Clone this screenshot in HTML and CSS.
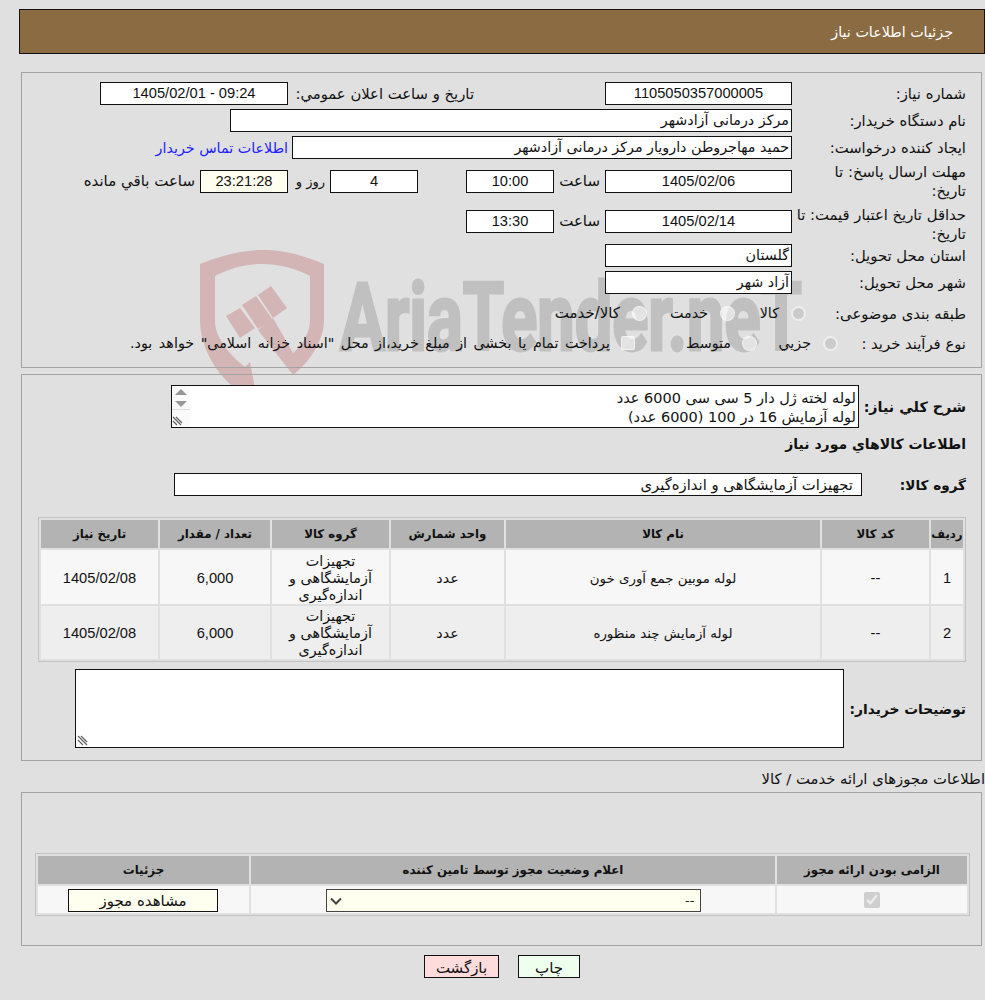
FILE: index.html
```html
<!DOCTYPE html>
<html lang="fa" dir="rtl">
<head>
<meta charset="utf-8">
<title>جزئیات اطلاعات نیاز</title>
<link rel="stylesheet" href="styles.css">
</head>
<body>
<svg class="watermark" width="985" height="400" viewBox="0 0 985 400" aria-hidden="true">
  <path class="wm-red" d="M200 24C225 14 245 10 262 10C282 10 300 14 324 24V80C324 100 310 122 293 135L258 90L273 78L293 113C303 105 310 92 310 80V36C295 28 278 24 262 24C246 24 230 28 215 36V80C215 95 224 110 245 127L250 122L257 160H232L238 150C215 135 200 105 200 80Z"/>
  <path class="wm-red" d="M226 76L240 68L255 88L240 98ZM242 65L256 56L273 80L258 89ZM258 55L271 46L287 68L273 78Z"/>
  <text class="wm-text" x="340" y="110" textLength="462" lengthAdjust="spacingAndGlyphs">AriaTender.neT</text>
</svg>

<header class="page-title"><h1>جزئیات اطلاعات نیاز</h1></header>

<section class="panel panel-main">
  <div class="row">
    <div class="label">شماره نیاز:</div>
    <div class="field w-187 center num">1105050357000005</div>
    <div class="label label-announce">تاریخ و ساعت اعلان عمومي:</div>
    <div class="field w-188 center num">09:24 - 1405/02/01</div>
  </div>
  <div class="row">
    <div class="label">نام دستگاه خریدار:</div>
    <div class="field w-562">مرکز درمانی آزادشهر</div>
  </div>
  <div class="row">
    <div class="label">ایجاد کننده درخواست:</div>
    <div class="field w-500">حمید مهاجروطن دارویار مرکز درمانی آزادشهر</div>
    <a class="contact" href="#">اطلاعات تماس خریدار</a>
  </div>
  <div class="row row-tall row-first-tall">
    <div class="label label-wrap">مهلت ارسال پاسخ: تا تاریخ:</div>
    <div class="field w-187 center num">1405/02/06</div>
    <div class="hour-label">ساعت</div>
    <div class="field w-88 center num">10:00</div>
    <div class="field w-88 center num days">4</div>
    <div class="days-label">روز و</div>
    <div class="field w-88 center num ivory">23:21:28</div>
    <div class="remain-label">ساعت باقي مانده</div>
  </div>
  <div class="row row-tall">
    <div class="label label-low">حداقل تاریخ اعتبار قیمت: تا تاریخ:</div>
    <div class="field w-187 center num">1405/02/14</div>
    <div class="hour-label">ساعت</div>
    <div class="field w-88 center num">13:30</div>
  </div>
  <div class="row row-after-tall">
    <div class="label">استان محل تحویل:</div>
    <div class="field w-187">گلستان</div>
  </div>
  <div class="row">
    <div class="label">شهر محل تحویل:</div>
    <div class="field w-187">آزاد شهر</div>
  </div>
  <div class="row row-choice">
    <div class="label label-subject">طبقه بندی موضوعی:</div>
    <label class="choice choice-goods"><span class="radio radio-on"></span>کالا</label>
    <label class="choice choice-service"><span class="radio"></span>خدمت</label>
    <label class="choice choice-both"><span class="radio"></span>کالا/خدمت</label>
  </div>
  <div class="row row-choice">
    <div class="label label-process">نوع فرآیند خرید :</div>
    <label class="choice choice-small"><span class="radio radio-on"></span>جزیي</label>
    <label class="choice choice-mid"><span class="radio"></span>متوسط</label>
    <label class="choice choice-pay"><span class="box"></span>پرداخت تمام یا بخشی از مبلغ خرید،از محل "اسناد خزانه اسلامی" خواهد بود.</label>
  </div>
</section>

<section class="panel panel-goods">
  <div class="summary-row">
    <div class="strong-label">شرح کلي نیاز:</div>
    <div class="textbox textbox-summary">
      <div class="textbox-text">لوله لخته ژل دار 5 سی سی 6000 عدد<br>لوله آزمایش 16 در 100 (6000 عدد)</div>
      <div class="scrollbar">
        <svg width="18" height="41" viewBox="0 0 18 41">
          <path class="sb-arrow" d="M3 9L9 3L15 9Z"/>
          <path class="sb-arrow" d="M3 15H15L9 21Z"/>
          <path class="sb-line" d="M0 23.5H18"/>
          <path class="grip" d="M1 31L9 39M1 35L5 39M4 31L10 37"/>
        </svg>
      </div>
    </div>
  </div>
  <h2 class="goods-title">اطلاعات کالاهاي مورد نیاز</h2>
  <div class="group-row">
    <div class="strong-label">گروه کالا:</div>
    <div class="field group-field">تجهیزات آزمایشگاهی و اندازه‌گیری</div>
  </div>
  <table class="grid goods-grid">
    <colgroup><col class="c32"><col class="c107"><col class="c314"><col class="c113"><col class="c117"><col class="c110"><col class="c117"></colgroup>
    <thead>
      <tr><th>ردیف</th><th>کد کالا</th><th>نام کالا</th><th>واحد شمارش</th><th>گروه کالا</th><th>تعداد / مقدار</th><th>تاریخ نیاز</th></tr>
    </thead>
    <tbody>
      <tr class="odd"><td class="num">1</td><td class="num">--</td><td class="item-name">لوله موبین جمع آوری خون</td><td>عدد</td><td>تجهیزات آزمایشگاهی و اندازه‌گیری</td><td class="num">6,000</td><td class="num">1405/02/08</td></tr>
      <tr class="even"><td class="num">2</td><td class="num">--</td><td class="item-name">لوله آزمایش چند منظوره</td><td>عدد</td><td>تجهیزات آزمایشگاهی و اندازه‌گیری</td><td class="num">6,000</td><td class="num">1405/02/08</td></tr>
    </tbody>
  </table>
  <div class="notes-row">
    <div class="strong-label">توضیحات خریدار:</div>
    <div class="textbox textbox-notes">
      <svg class="notes-grip" width="12" height="12" viewBox="0 0 12 12"><path class="grip" d="M1 2L10 11M1 6L6 11M4 2L10 8"/></svg>
    </div>
  </div>
</section>

<div class="license-title">اطلاعات مجوزهای ارائه خدمت / کالا</div>

<section class="panel panel-license">
  <table class="grid license-grid">
    <colgroup><col class="c190"><col class="c524"><col class="c211"></colgroup>
    <thead>
      <tr><th>الزامی بودن ارائه مجوز</th><th>اعلام وضعیت مجوز توسط تامین کننده</th><th>جزئیات</th></tr>
    </thead>
    <tbody>
      <tr class="odd">
        <td><input class="check" type="checkbox" checked disabled aria-label="الزامی"></td>
        <td>
          <div class="status-wrap">
            <select class="status" aria-label="وضعیت"><option>--</option></select>
            <svg class="status-arrow" width="12" height="8" viewBox="0 0 12 8"><path d="M1 1.5L6 6.5L11 1.5"/></svg>
          </div>
        </td>
        <td><button class="view-btn" type="button">مشاهده مجوز</button></td>
      </tr>
    </tbody>
  </table>
</section>

<div class="actions">
  <button class="btn btn-back" type="button">بازگشت</button>
  <button class="btn btn-print" type="button">چاپ</button>
</div>
</body>
</html>
```
FILE: styles.css
```css
* { box-sizing: border-box; }
html, body { margin: 0; padding: 0; }
body {
  position: relative;
  width: 985px;
  height: 1000px;
  overflow: hidden;
  background: #e0e0e0;
  color: #111;
  font-family: "DejaVu Sans", sans-serif;
  font-size: 14.3px;
}
.watermark {
  position: absolute;
  left: 0;
  top: 240px;
  pointer-events: none;
}
.wm-red { fill: #d4b5b6; }
.wm-text {
  direction: ltr;
  fill: #c0c0c0;
  stroke: #c0c0c0;
  stroke-width: 3px;
  font-family: Roboto, sans-serif;
  font-weight: 700;
  font-size: 94px;
}
.num { font-family: "Liberation Sans", "DejaVu Sans", sans-serif; font-size: 14.67px; }

.page-title {
  margin: 9px 0 0 19px;
  height: 45px;
  background: #8b6c42;
  border: 1px solid #111;
  display: flex;
  align-items: center;
  padding-right: 31px;
}
.page-title h1 { margin: 0; font-size: 14.3px; font-weight: 400; color: #fff; }

.panel {
  position: relative;
  margin: 0 3px 0 21px;
  border: 1px solid #a3a3a3;
}
.panel-main { margin-top: 18px; height: 296px; padding: 9px 15px 0 0; }
.panel-goods { margin-top: 6px; height: 387px; padding: 10px 15px 0 0; }
.panel-license { margin-top: 0; height: 154px; padding: 60px 11px 0 0; }

.row { display: flex; align-items: center; min-height: 23px; margin-bottom: 4px; }
.row-tall { height: 40px; margin-bottom: 0; }
.row-first-tall { margin-top: -2px; }
.row-after-tall { margin-top: 3px; }
.row-choice { height: 30px; margin-bottom: 0; }
.label { width: 174px; flex: none; font-size: 14.8px; line-height: 19px; }
.label-wrap { padding-left: 25px; }
.label-low { padding-top: 6px; }
.label-subject { width: 160px; }
.label-process { width: 128px; }

.field {
  flex: none;
  height: 23px;
  line-height: 21px;
  background: #fff;
  border: 1px solid #111;
  padding: 0 2px;
  white-space: nowrap;
  overflow: hidden;
}
.center { text-align: center; }
.ivory { background: #fffff0; }
.w-187 { width: 187px; }
.w-188 { width: 188px; }
.w-88 { width: 88px; }
.w-562 { width: 562px; }
.w-500 { width: 500px; }
.label-announce { width: 186px; margin-right: 131px; white-space: nowrap; }
.contact { margin-right: 4px; color: #2020ff; text-decoration: none; white-space: nowrap; }
.hour-label { width: 46px; margin-right: 5px; flex: none; font-size: 15px; white-space: nowrap; }
.days { margin-right: 48px; }
.days-label { width: 42px; padding-right: 5px; flex: none; font-size: 13px; white-space: nowrap; }
.remain-label { margin-right: 5px; font-size: 15px; white-space: nowrap; }

.choice { display: flex; align-items: center; flex: none; white-space: nowrap; }
.radio, .box { flex: none; width: 15px; height: 15px; margin-left: 12px; }
.radio {
  border-radius: 50%;
  background: rgba(255, 255, 255, .55);
  border: 1px solid rgba(255, 255, 255, .5);
}
.radio-on { background: #cbcbcb; border: 2px solid #eee; }
.box { width: 14px; height: 14px; margin-left: 11px; border-radius: 2px; background: rgba(255, 255, 255, .55); border: 1px solid rgba(255, 255, 255, .5); }
.choice-goods { width: 71px; }
.choice-service { width: 88px; }
.choice-both { font-size: 15px; }
.choice-small { width: 81px; }
.choice-mid { width: 122px; }
.choice-mid .radio { margin-left: 11px; }
.choice-pay { word-spacing: 2px; }

.strong-label { flex: none; font-weight: 700; white-space: nowrap; }
.summary-row { display: flex; align-items: center; height: 43px; }
.summary-row .strong-label { width: 107px; }
.textbox { position: relative; flex: none; background: #fff; border: 1px solid #111; }
.textbox-summary { width: 688px; height: 43px; overflow: hidden; }
.textbox-text { padding: 3px 2px 0 0; font-size: 14.5px; line-height: 19px; white-space: nowrap; }
.scrollbar { position: absolute; left: 0; top: 0; width: 18px; height: 41px; background: #fafafa; }
.scrollbar svg { display: block; }
.sb-arrow { fill: #969696; }
.sb-line { stroke: #ddd; stroke-width: 1; fill: none; }
.grip { stroke: #666; stroke-width: 1.3; fill: none; }
.goods-title { margin: 6px 0 0; height: 26px; font-size: 14px; font-weight: 700; line-height: 20px; }
.group-row { display: flex; align-items: center; margin-top: 13px; height: 23px; }
.group-row .strong-label { width: 104px; font-size: 13.6px; }
.group-field { width: 688px; padding-right: 8px; font-size: 14.8px; }

.grid { table-layout: fixed; border-collapse: separate; border-spacing: 2px; border: 1px solid #c2c2c2; }
.grid th { background: #b3b3b3; height: 28px; padding: 0; font-size: 11.8px; font-weight: 700; }
.grid td { padding: 0; text-align: center; line-height: 17px; }
.odd td { background: #f7f7f7; }
.even td { background: #eee; }
.goods-grid { width: 928px; margin-top: 21px; }
.goods-grid .odd td { height: 54px; padding-top: 3px; }
.goods-grid .even td { height: 53px; padding-top: 2px; }
.goods-grid .item-name { font-size: 13.4px; }
.c32 { width: 32px; } .c107 { width: 107px; } .c314 { width: 314px; } .c113 { width: 113px; }
.c117 { width: 117px; } .c110 { width: 110px; } .c190 { width: 190px; } .c524 { width: 524px; } .c211 { width: 211px; }
.notes-row { display: flex; align-items: center; margin-top: 7px; height: 79px; }
.notes-row .strong-label { width: 122px; font-size: 13.8px; }
.textbox-notes { width: 769px; height: 79px; }
.notes-grip { position: absolute; left: 1px; bottom: 1px; display: block; }

.license-title { margin-top: 8px; height: 23px; font-size: 14.8px; line-height: 20px; white-space: nowrap; }
.license-grid { width: 935px; }
.license-grid .odd td { height: 27px; }
.check { display: block; width: 16px; height: 16px; margin: 0 auto; }
.status-wrap { position: relative; width: 375px; height: 23px; margin: 1px auto 0; }
.status { display: block; appearance: none; width: 100%; height: 23px; background: #fffff0; border: 1px solid #444; border-radius: 0; font-family: inherit; font-size: 13px; padding: 0 5px 0 14px; color: #222; }
.status-arrow { position: absolute; left: 4px; top: 8px; }
.status-arrow path { fill: none; stroke: #444; stroke-width: 2; }
.view-btn { display: block; width: 150px; height: 23px; margin: 1px 31px 0 30px; background: #fffff0; border: 1px solid #111; border-radius: 0; padding: 2px 0 0; font-family: inherit; font-size: 15px; color: #111; }

.actions { display: flex; justify-content: center; gap: 19px; margin-top: 9px; padding-left: 19px; }
.btn { height: 23px; border: 1px solid #111; border-radius: 0; padding: 2px 0 0; font-family: inherit; font-size: 15px; color: #111; }
.btn-back { width: 75px; background: #ffdcdc; order: 2; }
.btn-print { width: 62px; background: #eeffee; order: 1; }
```
